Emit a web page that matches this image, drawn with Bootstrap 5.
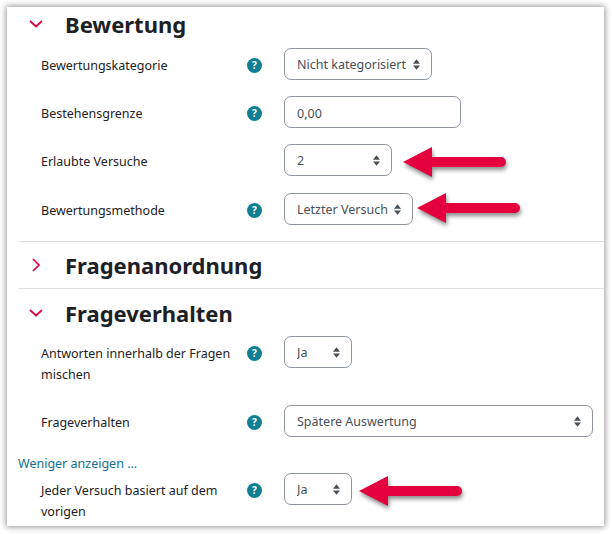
<!DOCTYPE html>
<html lang="de">
<head>
    <meta charset="UTF-8">
    <title>Bewertung</title>
    <link href="https://cdn.jsdelivr.net/npm/bootstrap@5.3.0/dist/css/bootstrap.min.css" rel="stylesheet">
    <style>
        html, body { background: #fff; }
        body { margin: 0; min-height: 534px; padding: 7px 0 8px; font-family: "Noto Sans", sans-serif; font-size: 12.5px; color: #1d2125; }
        .sheet { margin: 0 8px 0 7px; height: 519px; padding-left: 11px; background: #fff; box-shadow: 0 0 6px 1px rgba(0,0,0,.42); }
        .sect-head { height: 41px; padding-bottom: 7px; }
        .sect-head.bordered { height: 47px; padding-bottom: 0; border-top: 1px solid #dee2e6; }
        .sect-head.bordered.tall { height: 48px; }
        .sect-chev { width: 47px; padding-left: 11px; line-height: 0; }
        .sect-title { font-size: 22px; font-weight: 700; line-height: 1; margin: 0; color: #1d2125; }
        .field { margin-bottom: 16px; padding-left: 23px; min-height: 32px; }
        .field.gap-one { margin-bottom: 17px; }
        .field.gap-two { margin-bottom: 20px; }
        .field-name { width: 206px; padding-top: 8px; line-height: 20.5px; }
        .help-dot { width: 15px; height: 15px; margin: 10px 22px 0 0; background: #0f7f94; color: #fff; font-size: 10px; font-weight: 700; line-height: 15px; text-align: center; border-radius: 50%; flex: none; }
        .field-ctl.form-select, .field-ctl.form-control { height: 32px; border: 1px solid #8f959e; border-radius: 7px; font-size: 12.5px; color: #495057; padding: 2px 20px 0 12px; box-shadow: none; font-family: inherit; }
        .field-ctl.form-select { background-image: url("data:image/svg+xml,%3Csvg xmlns='http://www.w3.org/2000/svg' viewBox='0 0 8 12'%3E%3Cpath fill='%23495057' d='M4 0 8 5H0zM4 12 0 7h8z'/%3E%3C/svg%3E"); background-size: 7px 11px; background-position: right 11px center; }
        .w-wide { width: 148px; }
        .w-num { width: 177px; }
        .w-try { width: 108px; }
        .w-method { width: 129px; }
        .w-yes { width: 68px; }
        .w-full { width: 309px; }
        .mark-arrow { display: block; flex: none; filter: drop-shadow(1px 3px 2px rgba(0,0,0,.45)); }
        .arrow-try { margin: 2px 0 -2px 11px; }
        .arrow-method { margin: -1px 0 1px 4px; }
        .arrow-again { margin: 2px 0 -2px 7px; }
        .less-link { color: #0f6f8f; line-height: 18px; display: block; text-decoration: none; height: 20px; padding-top: 2px; }
    </style>
</head>
<body>
    <div class="sheet">
        <div class="sect-head d-flex align-items-center">
            <div class="sect-chev"><svg width="14" height="8" viewBox="0 0 14 8"><path d="M1 1l6 5.5L13 1" fill="none" stroke="#e4003f" stroke-width="1.7"/></svg></div>
            <h3 class="sect-title">Bewertung</h3>
        </div>
        <div class="field d-flex">
            <div class="field-name">Bewertungskategorie</div>
            <div class="help-dot">?</div>
            <select class="form-select field-ctl w-wide"><option>Nicht kategorisiert</option></select>
        </div>
        <div class="field d-flex">
            <div class="field-name">Bestehensgrenze</div>
            <div class="help-dot">?</div>
            <input class="form-control field-ctl w-num" value="0,00">
        </div>
        <div class="field gap-one d-flex">
            <div class="field-name">Erlaubte Versuche</div>
            <div class="help-dot invisible">?</div>
            <select class="form-select field-ctl w-try"><option>2</option></select>
            <svg class="mark-arrow arrow-try" width="104" height="32" viewBox="0 0 104 32"><path d="M0 16 29 1V11H98a5 5 0 0 1 0 10H29V31z" fill="#e4003f"/></svg>
        </div>
        <div class="field d-flex">
            <div class="field-name">Bewertungsmethode</div>
            <div class="help-dot">?</div>
            <select class="form-select field-ctl w-method"><option>Letzter Versuch</option></select>
            <svg class="mark-arrow arrow-method" width="104" height="32" viewBox="0 0 104 32"><path d="M0 16 29 1V11H98a5 5 0 0 1 0 10H29V31z" fill="#e4003f"/></svg>
        </div>
        <div class="sect-head bordered d-flex align-items-center">
            <div class="sect-chev"><svg width="14" height="14" viewBox="0 0 14 14"><path d="M4 1l6 6-6 6" fill="none" stroke="#e4003f" stroke-width="1.7"/></svg></div>
            <h3 class="sect-title">Fragenanordnung</h3>
        </div>
        <div class="sect-head bordered tall d-flex align-items-center">
            <div class="sect-chev"><svg width="14" height="8" viewBox="0 0 14 8"><path d="M1 1l6 5.5L13 1" fill="none" stroke="#e4003f" stroke-width="1.7"/></svg></div>
            <h3 class="sect-title">Frageverhalten</h3>
        </div>
        <div class="field gap-two d-flex">
            <div class="field-name">Antworten innerhalb der Fragen mischen</div>
            <div class="help-dot">?</div>
            <select class="form-select field-ctl w-yes"><option>Ja</option></select>
        </div>
        <div class="field d-flex">
            <div class="field-name">Frageverhalten</div>
            <div class="help-dot">?</div>
            <select class="form-select field-ctl w-full"><option>Spätere Auswertung</option></select>
        </div>
        <a class="less-link" href="#">Weniger anzeigen ...</a>
        <div class="field d-flex">
            <div class="field-name">Jeder Versuch basiert auf dem vorigen</div>
            <div class="help-dot">?</div>
            <select class="form-select field-ctl w-yes"><option>Ja</option></select>
            <svg class="mark-arrow arrow-again" width="104" height="32" viewBox="0 0 104 32"><path d="M0 16 29 1V11H98a5 5 0 0 1 0 10H29V31z" fill="#e4003f"/></svg>
        </div>
    </div>
    <script src="https://cdn.jsdelivr.net/npm/bootstrap@5.3.0/dist/js/bootstrap.bundle.min.js"></script>
</body>
</html>
